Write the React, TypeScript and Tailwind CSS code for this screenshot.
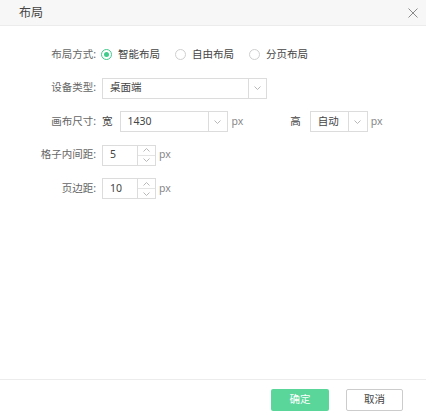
import React from 'react';

const font = { fontFamily: '"Noto Sans", "Noto Sans CJK SC", sans-serif' };

function Chevron({ up = false }: { up?: boolean }) {
    return (
        <svg width="7" height="4" viewBox="0 0 7 4" fill="none" className={up ? 'rotate-180' : ''}>
            <path d="M0.5 0.5L3.5 3.5L6.5 0.5" stroke="#b0b0b0" strokeWidth="0.9" />
        </svg>
    );
}

function Select({ value, width, arrow }: { value: string; width: string; arrow: string }) {
    return (
        <div className={`flex h-[21px] ${width} border border-[#dcdcdc] bg-white`}>
            <div className="flex-1 pl-[7px] flex items-center text-[#444]">{value}</div>
            <div className={`${arrow} border-l border-[#dcdcdc] flex items-center justify-center`}>
                <Chevron />
            </div>
        </div>
    );
}

function Spinner({ value }: { value: string }) {
    return (
        <div className="flex h-[21px] w-[54px] border border-[#dcdcdc] bg-white">
            <div className="flex-1 pl-[7px] flex items-center text-[#444]">{value}</div>
            <div className="w-[18px] border-l border-[#dcdcdc] flex flex-col">
                <div className="flex-1 flex items-center justify-center border-b border-[#e4e4e4]">
                    <Chevron up />
                </div>
                <div className="flex-1 flex items-center justify-center">
                    <Chevron />
                </div>
            </div>
        </div>
    );
}

function Radio({ label, checked = false }: { label: string; checked?: boolean }) {
    return (
        <div className="flex items-center gap-[6px]">
            <div
                className={`w-[11px] h-[11px] rounded-full border flex items-center justify-center bg-white ${
                    checked ? 'border-[#3fcb8c]' : 'border-[#cfcfcf]'
                }`}
            >
                {checked && <div className="w-[5px] h-[5px] rounded-full bg-[#3fcb8c]" />}
            </div>
            <span className="text-[#444]">{label}</span>
        </div>
    );
}

function Row({ label, children }: { label: string; children: React.ReactNode }) {
    return (
        <div className="flex items-center h-[21px]">
            <div className="w-[96px] text-right text-[#666]">{label}</div>
            <div className="pl-[6px] flex items-center">{children}</div>
        </div>
    );
}

export default function App() {
    return (
        <div className="w-full h-[417px] bg-white flex flex-col text-[10.5px]" style={font}>
            {/* Header */}
            <div className="h-[26px] shrink-0 bg-[#f7f7f7] border-b border-[#ececec] flex items-center justify-between pl-[19px] pr-[8px]">
                <span className="text-[12px] text-[#444]">布局</span>
                <svg width="10" height="10" viewBox="0 0 10 10">
                    <path d="M0.5 0.5L9.5 9.5M9.5 0.5L0.5 9.5" stroke="#8a8a8a" strokeWidth="1" />
                </svg>
            </div>

            {/* Body */}
            <div className="flex-1 pt-[18px] flex flex-col gap-[12.5px]">
                <Row label="布局方式:">
                    <div className="flex items-center gap-[15px] -ml-[1px]">
                        <Radio label="智能布局" checked />
                        <Radio label="自由布局" />
                        <Radio label="分页布局" />
                    </div>
                </Row>
                <Row label="设备类型:">
                    <Select value="桌面端" width="w-[165px]" arrow="w-[18px]" />
                </Row>
                <Row label="画布尺寸:">
                    <span className="text-[#444] mr-[7px]">宽</span>
                    <Select value="1430" width="w-[108px]" arrow="w-[19px]" />
                    <span className="ml-[4px] text-[#888]">px</span>
                    <span className="ml-[47px] mr-[9px] text-[#444]">高</span>
                    <Select value="自动" width="w-[58px]" arrow="w-[19px]" />
                    <span className="ml-[3px] text-[#888]">px</span>
                </Row>
                <Row label="格子内间距:">
                    <Spinner value="5" />
                    <span className="ml-[3px] text-[#888]">px</span>
                </Row>
                <Row label="页边距:">
                    <Spinner value="10" />
                    <span className="ml-[3px] text-[#888]">px</span>
                </Row>
            </div>

            {/* Footer */}
            <div className="h-[38px] shrink-0 border-t border-[#ececec] flex items-start justify-end gap-[17px] pt-[9px] pr-[23px]">
                <button className="w-[58px] h-[22px] rounded-[2px] bg-[#5ad69a] text-white">确定</button>
                <button className="w-[57px] h-[22px] rounded-[2px] border border-[#cccccc] bg-white text-[#444]">取消</button>
            </div>
        </div>
    );
}
